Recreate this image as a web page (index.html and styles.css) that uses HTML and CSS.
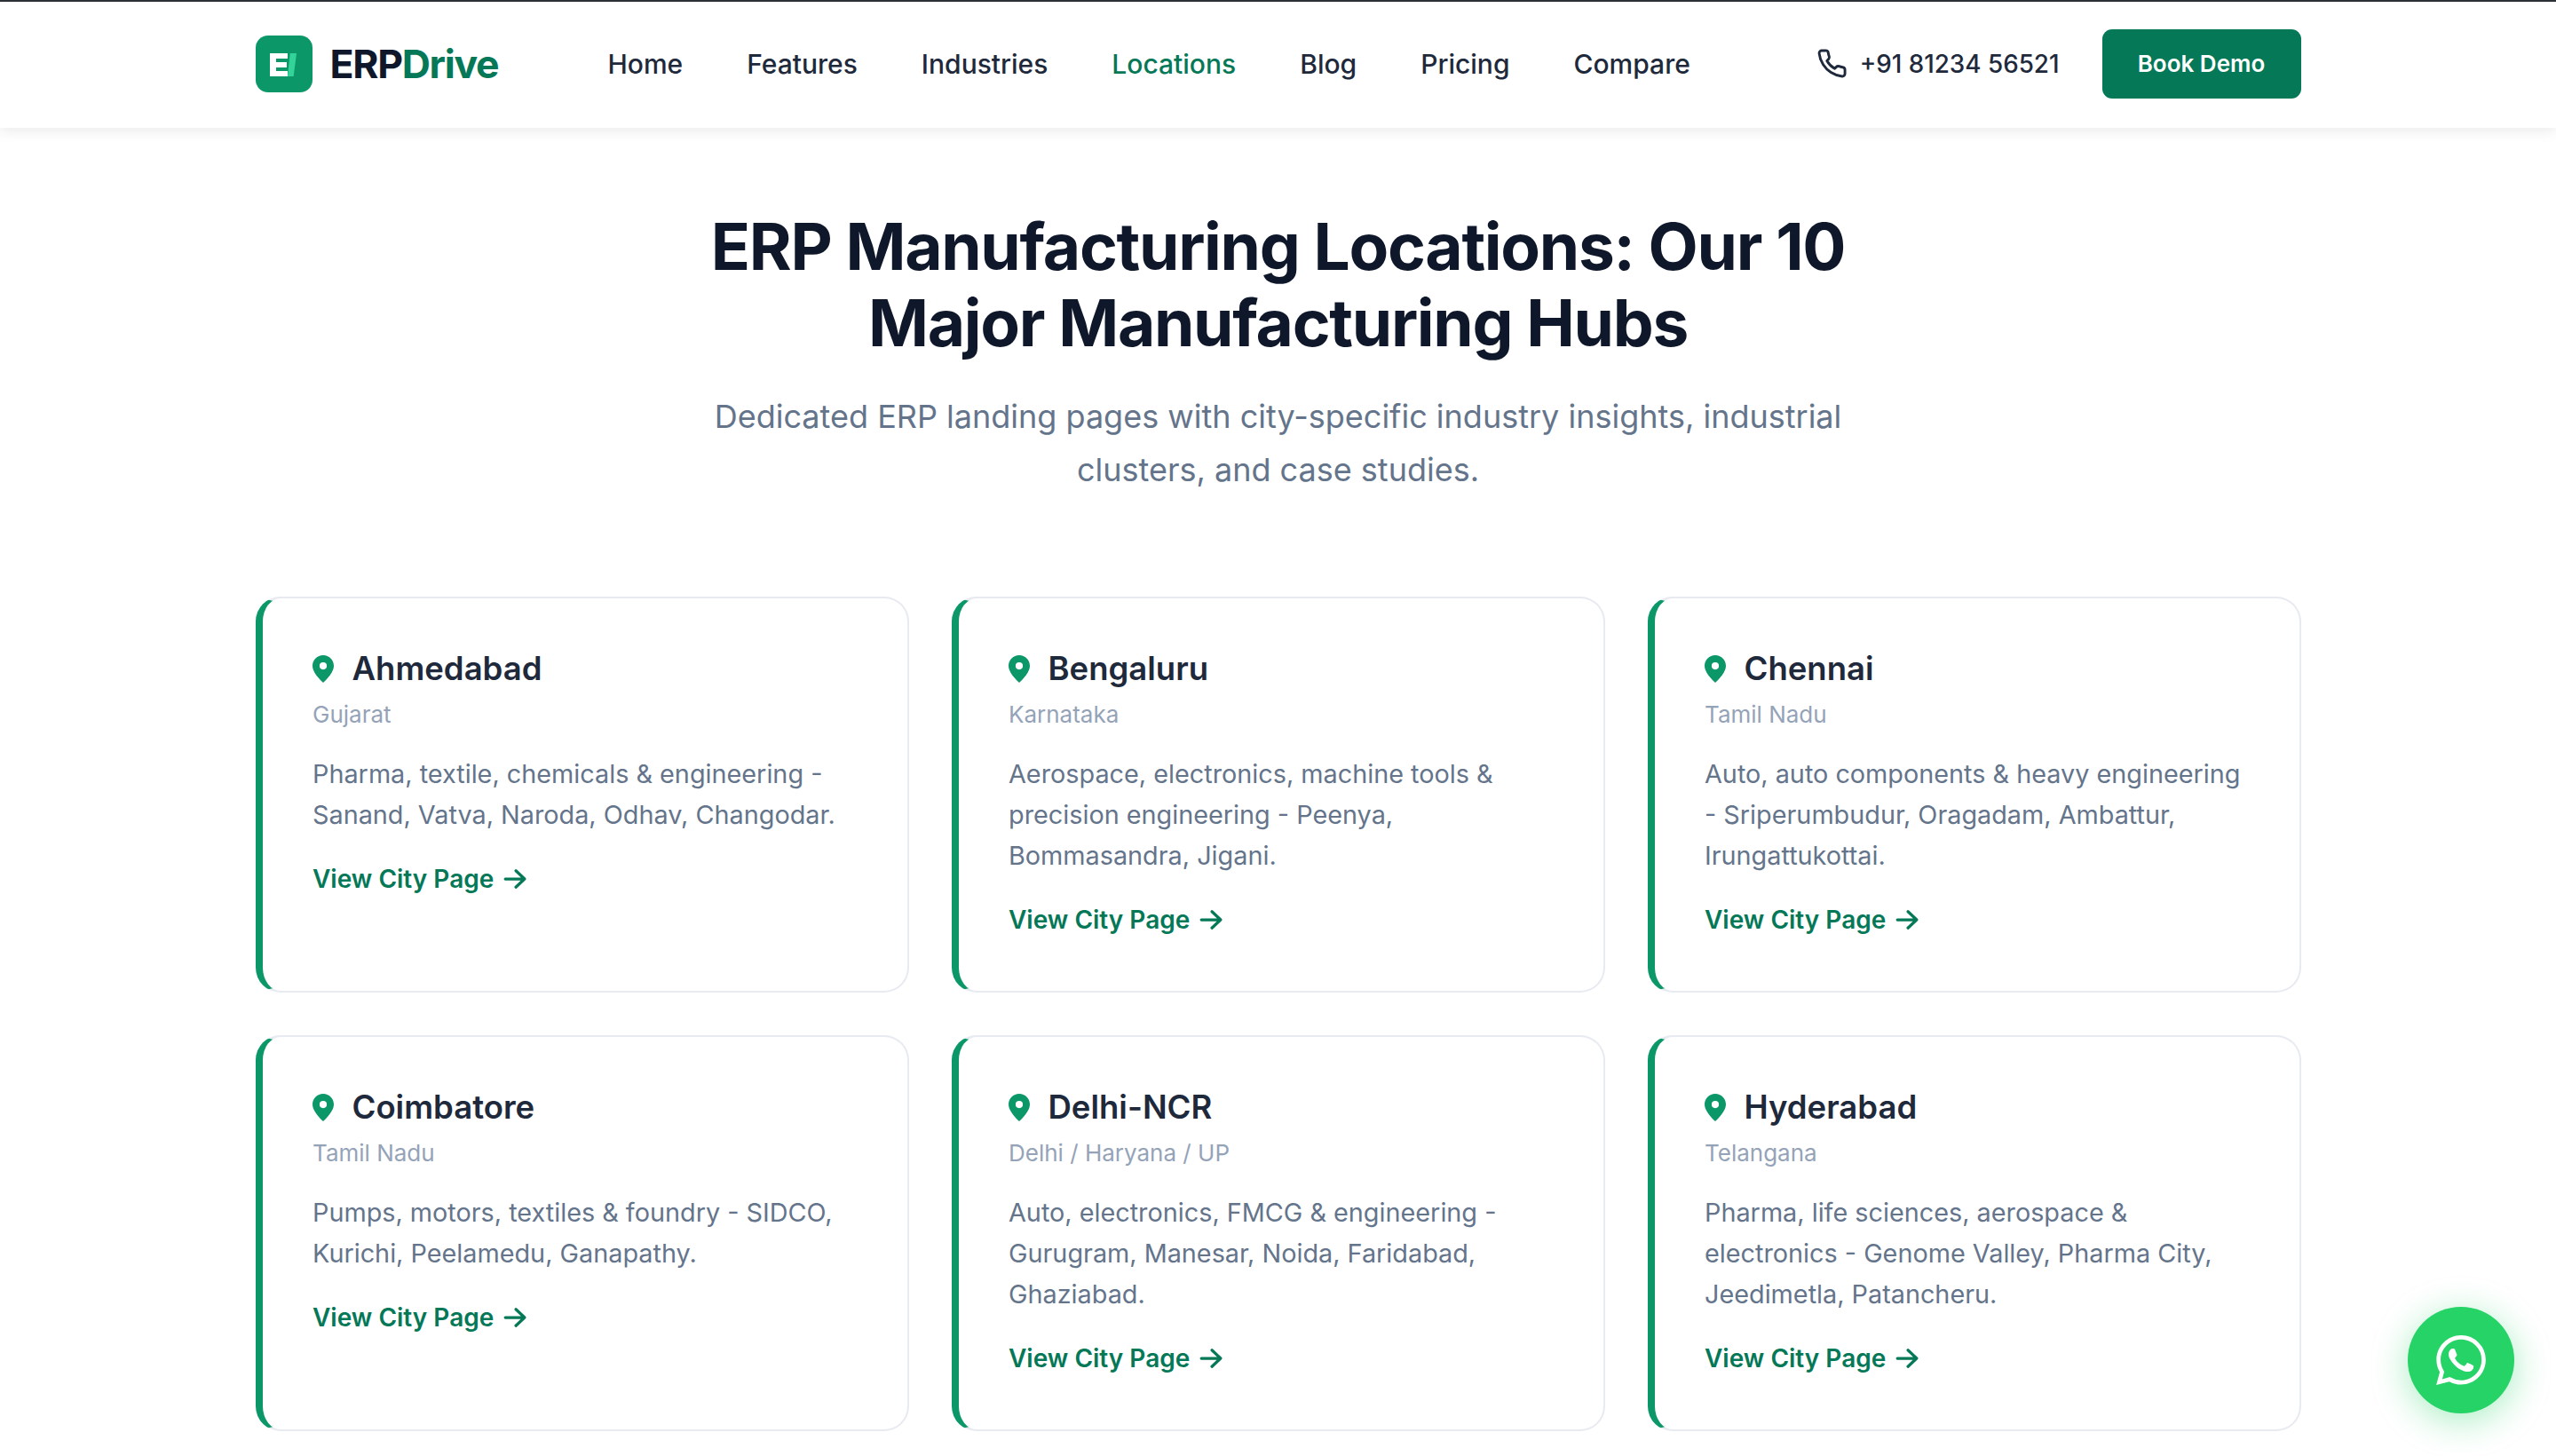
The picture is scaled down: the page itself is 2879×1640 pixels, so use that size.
FILE: index.html
```html
<!DOCTYPE html>
<html lang="en">
<head>
<meta charset="utf-8">
<title>ERP Manufacturing Locations</title>
<link rel="stylesheet" href="styles.css">
</head>
<body>
<header class="site-header">
  <div class="container nav-row">
    <a class="brand" href="#">
      <svg class="brand-mark" viewBox="0 0 64 64" aria-hidden="true">
        <rect width="64" height="64" rx="14" fill="#0b9767"/>
        <path d="M16 20h20v6H23v4h12v6H23v4h13v6H16z" fill="#fff"/>
        <path d="M38.700 20H46l-3.300 26H36z" fill="#34d399"/>
      </svg>
      <span class="brand-text">ERP<span class="brand-accent">Drive</span></span>
    </a>
    <nav class="main-nav">
      <a href="#">Home</a>
      <a href="#">Features</a>
      <a href="#">Industries</a>
      <a href="#" class="active">Locations</a>
      <a href="#">Blog</a>
      <a href="#">Pricing</a>
      <a href="#">Compare</a>
    </nav>
    <div class="nav-actions">
      <a class="phone" href="#">
        <svg class="phone-icon" viewBox="0 0 24 24" aria-hidden="true"><path d="M22 16.92v3a2 2 0 0 1-2.18 2 19.79 19.79 0 0 1-8.63-3.07 19.5 19.5 0 0 1-6-6 19.79 19.79 0 0 1-3.07-8.67A2 2 0 0 1 4.11 2h3a2 2 0 0 1 2 1.72c.13.96.36 1.9.7 2.81a2 2 0 0 1-.45 2.11L8.09 9.91a16 16 0 0 0 6 6l1.27-1.27a2 2 0 0 1 2.11-.45c.91.34 1.85.57 2.81.7A2 2 0 0 1 22 16.92z"/></svg>
        +91 81234 56521
      </a>
      <a class="btn-demo" href="#">Book Demo</a>
    </div>
  </div>
</header>

<main class="container">
  <section class="intro">
    <h1>ERP Manufacturing Locations: Our 10 Major Manufacturing Hubs</h1>
    <p>Dedicated ERP landing pages with city-specific industry insights, industrial clusters, and case studies.</p>
  </section>

  <section class="city-grid">
    <article class="city-card">
      <h3><svg class="pin" viewBox="0 0 24 31" aria-hidden="true"><path fill-rule="evenodd" d="M12 0C5.4 0 0 5.3 0 11.9 0 19.5 9 28 12 31c3-3 12-11.500 12-19.100C24 5.300 18.600 0 12 0zm0 8a4.100 4.100 0 1 1 0 8.200A4.100 4.100 0 0 1 12 8z"/></svg>Ahmedabad</h3>
      <p class="state">Gujarat</p>
      <p class="desc">Pharma, textile, chemicals &amp; engineering - Sanand, Vatva, Naroda, Odhav, Changodar.</p>
      <a class="city-link" href="#">View City Page<svg class="arrow" viewBox="0 0 24 24" aria-hidden="true"><path d="M2 12h20M13 3.500l9 8.500-9 8.500"/></svg></a>
    </article>
    <article class="city-card">
      <h3><svg class="pin" viewBox="0 0 24 31" aria-hidden="true"><path fill-rule="evenodd" d="M12 0C5.4 0 0 5.3 0 11.9 0 19.5 9 28 12 31c3-3 12-11.500 12-19.100C24 5.300 18.600 0 12 0zm0 8a4.100 4.100 0 1 1 0 8.200A4.100 4.100 0 0 1 12 8z"/></svg>Bengaluru</h3>
      <p class="state">Karnataka</p>
      <p class="desc">Aerospace, electronics, machine tools &amp; precision engineering - Peenya, Bommasandra, Jigani.</p>
      <a class="city-link" href="#">View City Page<svg class="arrow" viewBox="0 0 24 24" aria-hidden="true"><path d="M2 12h20M13 3.500l9 8.500-9 8.500"/></svg></a>
    </article>
    <article class="city-card">
      <h3><svg class="pin" viewBox="0 0 24 31" aria-hidden="true"><path fill-rule="evenodd" d="M12 0C5.4 0 0 5.3 0 11.9 0 19.5 9 28 12 31c3-3 12-11.500 12-19.100C24 5.300 18.600 0 12 0zm0 8a4.100 4.100 0 1 1 0 8.200A4.100 4.100 0 0 1 12 8z"/></svg>Chennai</h3>
      <p class="state">Tamil Nadu</p>
      <p class="desc">Auto, auto components &amp; heavy engineering - Sriperumbudur, Oragadam, Ambattur, Irungattukottai.</p>
      <a class="city-link" href="#">View City Page<svg class="arrow" viewBox="0 0 24 24" aria-hidden="true"><path d="M2 12h20M13 3.500l9 8.500-9 8.500"/></svg></a>
    </article>
    <article class="city-card">
      <h3><svg class="pin" viewBox="0 0 24 31" aria-hidden="true"><path fill-rule="evenodd" d="M12 0C5.4 0 0 5.3 0 11.9 0 19.5 9 28 12 31c3-3 12-11.500 12-19.100C24 5.300 18.600 0 12 0zm0 8a4.100 4.100 0 1 1 0 8.200A4.100 4.100 0 0 1 12 8z"/></svg>Coimbatore</h3>
      <p class="state">Tamil Nadu</p>
      <p class="desc">Pumps, motors, textiles &amp; foundry - SIDCO, Kurichi, Peelamedu, Ganapathy.</p>
      <a class="city-link" href="#">View City Page<svg class="arrow" viewBox="0 0 24 24" aria-hidden="true"><path d="M2 12h20M13 3.500l9 8.500-9 8.500"/></svg></a>
    </article>
    <article class="city-card">
      <h3><svg class="pin" viewBox="0 0 24 31" aria-hidden="true"><path fill-rule="evenodd" d="M12 0C5.4 0 0 5.3 0 11.9 0 19.5 9 28 12 31c3-3 12-11.500 12-19.100C24 5.300 18.600 0 12 0zm0 8a4.100 4.100 0 1 1 0 8.200A4.100 4.100 0 0 1 12 8z"/></svg>Delhi-NCR</h3>
      <p class="state">Delhi / Haryana / UP</p>
      <p class="desc">Auto, electronics, FMCG &amp; engineering - Gurugram, Manesar, Noida, Faridabad, Ghaziabad.</p>
      <a class="city-link" href="#">View City Page<svg class="arrow" viewBox="0 0 24 24" aria-hidden="true"><path d="M2 12h20M13 3.500l9 8.500-9 8.500"/></svg></a>
    </article>
    <article class="city-card">
      <h3><svg class="pin" viewBox="0 0 24 31" aria-hidden="true"><path fill-rule="evenodd" d="M12 0C5.4 0 0 5.3 0 11.9 0 19.5 9 28 12 31c3-3 12-11.500 12-19.100C24 5.300 18.600 0 12 0zm0 8a4.100 4.100 0 1 1 0 8.200A4.100 4.100 0 0 1 12 8z"/></svg>Hyderabad</h3>
      <p class="state">Telangana</p>
      <p class="desc">Pharma, life sciences, aerospace &amp; electronics - Genome Valley, Pharma City, Jeedimetla, Patancheru.</p>
      <a class="city-link" href="#">View City Page<svg class="arrow" viewBox="0 0 24 24" aria-hidden="true"><path d="M2 12h20M13 3.500l9 8.500-9 8.500"/></svg></a>
    </article>
  </section>
</main>

<a class="whatsapp" href="#" aria-label="WhatsApp">
  <svg viewBox="0 0 24 24" aria-hidden="true"><path d="M17.472 14.382c-.297-.149-1.758-.867-2.030-.967-.273-.099-.471-.148-.670.150-.197.297-.767.966-.940 1.164-.173.199-.347.223-.644.075-.297-.150-1.255-.463-2.390-1.475-.883-.788-1.480-1.761-1.653-2.059-.173-.297-.018-.458.130-.606.134-.133.298-.347.446-.520.149-.174.198-.298.298-.497.099-.198.050-.371-.025-.520-.075-.149-.669-1.612-.916-2.207-.242-.579-.487-.500-.669-.510-.173-.008-.371-.010-.570-.010-.198 0-.520.074-.792.372-.272.297-1.040 1.016-1.040 2.479 0 1.462 1.065 2.875 1.213 3.074.149.198 2.096 3.200 5.077 4.487.709.306 1.262.489 1.694.625.712.227 1.360.195 1.871.118.571-.085 1.758-.719 2.006-1.413.248-.694.248-1.289.173-1.413-.074-.124-.272-.198-.570-.347m-5.421 7.403h-.004a9.870 9.870 0 0 1-5.031-1.378l-.361-.214-3.741.982.998-3.648-.235-.374a9.860 9.860 0 0 1-1.510-5.260c.001-5.450 4.436-9.884 9.888-9.884 2.640 0 5.122 1.030 6.988 2.898a9.825 9.825 0 0 1 2.893 6.994c-.003 5.450-4.437 9.884-9.885 9.884m8.413-18.297A11.815 11.815 0 0 0 12.050 0C5.495 0 .160 5.335.157 11.892c0 2.096.547 4.142 1.588 5.945L.057 24l6.305-1.654a11.882 11.882 0 0 0 5.683 1.448h.005c6.554 0 11.890-5.335 11.893-11.893a11.821 11.821 0 0 0-3.480-8.413z"/></svg>
</a>
</body>
</html>
```

FILE: styles.css
```css
* { box-sizing: border-box; }

html, body {
  margin: 0;
  height: 1640px;
  overflow: hidden;
}

body {
  background: #fff;
  color: #0f172a;
  font-family: Inter, "Liberation Sans", sans-serif;
}

a { text-decoration: none; color: inherit; }

.container {
  width: 2304px;
  margin: 0 auto;
}

.site-header {
  height: 144px;
  background: #fff;
  border-top: 2px solid #2b2f36;
  box-shadow: 0 2px 16px rgba(15, 23, 42, 0.1);
}

.nav-row {
  height: 139px;
  display: flex;
  align-items: center;
}

.brand {
  display: flex;
  align-items: center;
  gap: 20px;
  width: 397px;
  flex: none;
}

.brand-mark { width: 64px; height: 64px; flex: none; }

.brand-text {
  font-size: 44.500px;
  font-weight: 700;
  letter-spacing: -1.300px;
  color: #0f172a;
}

.brand-accent { color: #047857; }

.main-nav {
  display: flex;
  gap: 72px;
  font-size: 30px;
  font-weight: 500;
  color: #1e293b;
}

.main-nav .active { color: #047857; }

.nav-actions {
  margin-left: auto;
  display: flex;
  align-items: center;
  gap: 48px;
}

.phone {
  display: flex;
  align-items: center;
  gap: 14px;
  font-size: 27.800px;
  font-weight: 500;
  color: #1e293b;
}

.phone-icon {
  width: 35px;
  height: 35px;
  fill: none;
  stroke: #1e293b;
  stroke-width: 2;
  stroke-linecap: round;
  stroke-linejoin: round;
}

.btn-demo {
  width: 224px;
  height: 78px;
  display: flex;
  align-items: center;
  justify-content: center;
  background: #047857;
  color: #fff;
  border-radius: 11px;
  font-size: 26px;
  font-weight: 600;
}

.intro {
  text-align: center;
  padding-top: 91px;
}

.intro h1 {
  margin: 0 auto;
  width: 1400px;
  font-size: 73px;
  line-height: 86px;
  font-weight: 700;
  letter-spacing: -1.300px;
  color: #0f172a;
}

.intro p {
  margin: 32px auto 0;
  width: 1344px;
  font-size: 36px;
  line-height: 60px;
  color: #64748b;
}

.city-grid {
  margin-top: 113px;
  display: grid;
  grid-template-columns: repeat(3, 736px);
  gap: 48px;
}

.city-card {
  height: 446px;
  padding: 55px 56px 56px 56.500px;
  background: #fff;
  border: 2px solid #e7eaf0;
  border-left: 8px solid #0b9767;
  border-radius: 28px;
}

.city-card h3 {
  margin: 0;
  display: flex;
  align-items: center;
  gap: 20.500px;
  font-size: 36.500px;
  line-height: 48px;
  font-weight: 600;
  color: #1e293b;
}

.pin { width: 24px; height: 31px; fill: #0b9767; flex: none; }

.state {
  margin: 8px 0 0;
  font-size: 26px;
  line-height: 40px;
  color: #94a3b8;
}

.desc {
  margin: 24px 0 0;
  font-size: 28.800px;
  line-height: 46px;
  color: #64748b;
}

.city-link {
  margin-top: 27px;
  display: inline-flex;
  align-items: center;
  gap: 11px;
  font-size: 28px;
  line-height: 44px;
  font-weight: 600;
  color: #047857;
}

.arrow {
  width: 26px;
  height: 26px;
  fill: none;
  stroke: #047857;
  stroke-width: 3;
  stroke-linecap: round;
  stroke-linejoin: round;
}

.whatsapp {
  position: fixed;
  right: 47px;
  bottom: 48px;
  width: 120px;
  height: 120px;
  border-radius: 50%;
  background: #25d366;
  box-shadow: 0 8px 40px rgba(37, 211, 102, 0.4);
  display: flex;
  align-items: center;
  justify-content: center;
}

.whatsapp svg { width: 56px; height: 56px; fill: #fff; }
```
